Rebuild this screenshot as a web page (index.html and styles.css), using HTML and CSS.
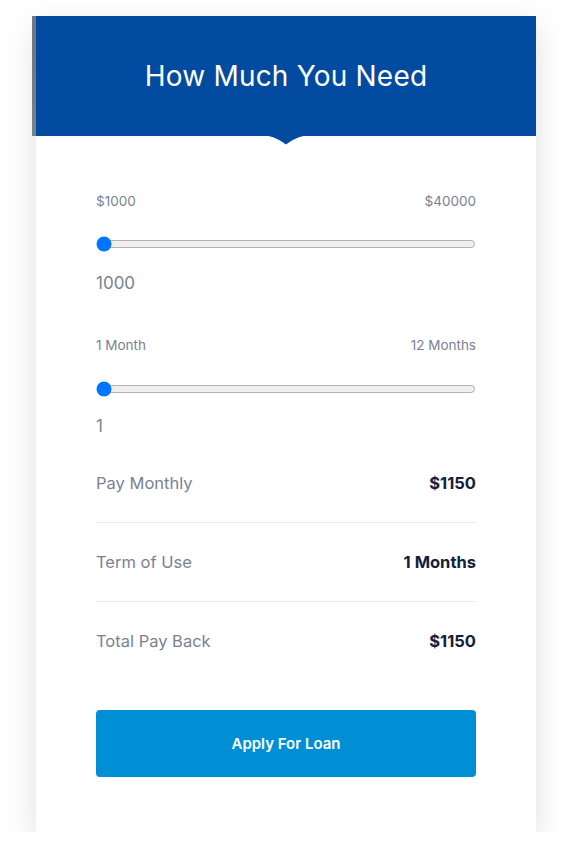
FILE: index.html
```html
<!DOCTYPE html>
<html lang="en">
<head>
<meta charset="utf-8">
<title>Loan Calculator</title>
<link rel="stylesheet" href="styles.css">
</head>
<body>
<div class="page">
  <div class="card">
    <div class="strip"></div>
    <div class="panel">
      <div class="header">
        <h2 class="title">How Much You Need</h2>
        <svg class="notch" width="62" height="10" viewBox="0 0 62 10" aria-hidden="true">
          <path d="M0 0 C16 0 22 3 31 9.5 C40 3 46 0 62 0 Z" fill="#024ba0"/>
        </svg>
      </div>
      <div class="body">
        <div class="range-labels"><span>$1000</span><span>$40000</span></div>
        <input class="slider" type="range" min="1000" max="40000" value="1000">
        <div class="value">1000</div>

        <div class="range-labels second"><span>1 Month</span><span>12 Months</span></div>
        <input class="slider" type="range" min="1" max="12" value="1">
        <div class="value last">1</div>

        <div class="rows">
          <div class="row"><span class="label">Pay Monthly</span><span class="amount">$1150</span></div>
          <div class="row"><span class="label">Term of Use</span><span class="amount">1 Months</span></div>
          <div class="row"><span class="label">Total Pay Back</span><span class="amount">$1150</span></div>
        </div>

        <button class="apply" type="button">Apply For Loan</button>
      </div>
    </div>
  </div>
</div>
</body>
</html>
```
FILE: styles.css
```css
* { box-sizing: border-box; }
html, body { margin: 0; padding: 0; background: #fff; }
body { font-family: Inter, "Noto Sans", "Liberation Sans", sans-serif; }

.page { padding: 16px 0 0 32px; }

.card { display: flex; align-items: flex-start; }
.strip { width: 4px; height: 120px; background: linear-gradient(#6f7b87, #7f8a96); }

.panel {
  width: 500px;
  background: #fff;
  box-shadow: 0 10px 30px rgba(0,0,0,0.13);
}

.header {
  position: relative;
  height: 120px;
  background: #024ba0;
  display: flex;
  align-items: center;
  justify-content: center;
}
.title {
  margin: 0;
  color: #fff;
  font-weight: 400;
  font-size: 28px;
  letter-spacing: 0.2px;
}
.notch {
  position: absolute;
  left: 219px;
  top: 119px;
  display: block;
}

.body {
  padding: 55px 60px 55px;
}

.range-labels {
  display: flex;
  justify-content: space-between;
  font-size: 13.5px;
  line-height: 20px;
  color: #7a8292;
}
.range-labels.second { margin-top: 40px; }

.slider {
  display: block;
  width: 380px;
  height: 16px;
  margin: 25px 0 0;
  padding: 0;
}
.range-labels.second + .slider { margin-top: 26px; }

.value {
  margin-top: 19px;
  font-size: 17px;
  line-height: 24px;
  color: #7a8292;
}
.value.last { margin-top: 17px; }

.rows { margin-top: 6px; }
.row {
  display: flex;
  justify-content: space-between;
  align-items: center;
  padding: 27px 0;
  line-height: 24px;
  border-bottom: 1px solid #e9ebf0;
}
.row:last-child { border-bottom: none; }
.label { font-size: 16.5px; color: #7a8292; }
.amount { font-size: 16.5px; font-weight: 700; color: #14213a; }

.apply {
  display: block;
  width: 100%;
  height: 67px;
  margin-top: 30px;
  border: none;
  border-radius: 4px;
  background: #008fd5;
  color: #fff;
  font-family: inherit;
  font-size: 15px;
  font-weight: 600;
}
```
